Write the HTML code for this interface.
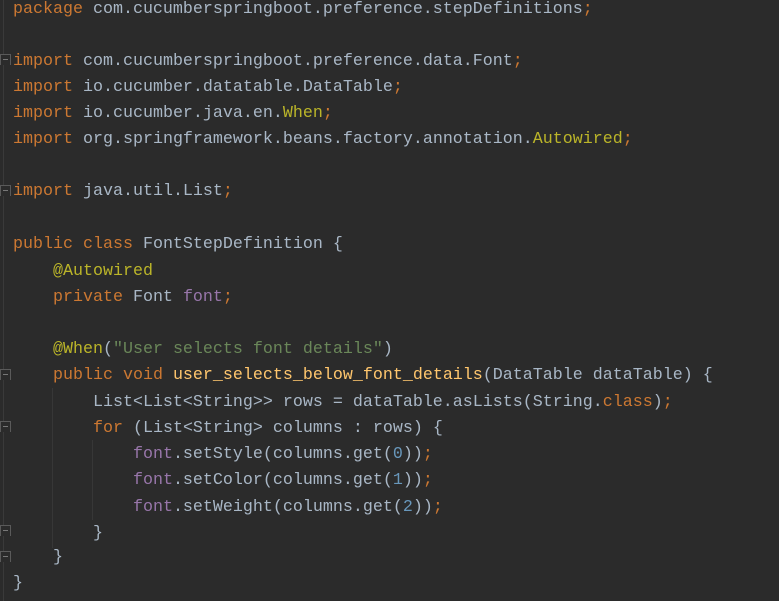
<!DOCTYPE html>
<html><head><meta charset="utf-8"><style>
body{margin:0;width:779px;height:601px;background:#2b2b2b;overflow:hidden;position:relative;font-family:"Liberation Mono",monospace;font-size:16.67px;color:#a9b7c6}
.l{position:absolute;left:13px;white-space:pre;height:26px;line-height:26px;margin-top:2px}
.k{color:#cc7832}.a{color:#bbb529}.s{color:#6a8759}.n{color:#6897bb}.f{color:#9876aa}.m{color:#ffc66d}
.g{position:absolute;left:3px;top:0;width:1px;height:601px;background:#3a3a3a}
.ig{position:absolute;width:1px;background:#373737}
.fold{position:absolute;left:0;width:9px;height:10px;border:1px solid #5a5a5a;border-bottom:none;background:#2b2b2b}
.fold:after{content:"";position:absolute;left:2px;top:4px;width:5px;height:1px;background:#777}
</style></head><body>
<div class="g"></div>
<div class="ig" style="left:52px;top:388px;height:160px"></div>
<div class="ig" style="left:92px;top:440px;height:80px"></div>
<div class="fold" style="top:54px"></div>
<div class="fold" style="top:185px"></div>
<div class="fold" style="top:369px"></div>
<div class="fold" style="top:421px"></div>
<div class="fold" style="top:525px"></div>
<div class="fold" style="top:551px"></div>
<div class="l" style="top:-5px"><span class="k">package</span> com.cucumberspringboot.preference.stepDefinitions<span class="k">;</span></div>
<div class="l" style="top:47px"><span class="k">import</span> com.cucumberspringboot.preference.data.Font<span class="k">;</span></div>
<div class="l" style="top:73px"><span class="k">import</span> io.cucumber.datatable.DataTable<span class="k">;</span></div>
<div class="l" style="top:99px"><span class="k">import</span> io.cucumber.java.en.<span class="a">When</span><span class="k">;</span></div>
<div class="l" style="top:125px"><span class="k">import</span> org.springframework.beans.factory.annotation.<span class="a">Autowired</span><span class="k">;</span></div>
<div class="l" style="top:177px"><span class="k">import</span> java.util.List<span class="k">;</span></div>
<div class="l" style="top:230px"><span class="k">public class</span> FontStepDefinition {</div>
<div class="l" style="top:257px">    <span class="a">@Autowired</span></div>
<div class="l" style="top:283px">    <span class="k">private</span> Font <span class="f">font</span><span class="k">;</span></div>
<div class="l" style="top:335px">    <span class="a">@When</span>(<span class="s">"User selects font details"</span>)</div>
<div class="l" style="top:361px">    <span class="k">public void</span> <span class="m">user_selects_below_font_details</span>(DataTable dataTable) {</div>
<div class="l" style="top:388px">        List&lt;List&lt;String&gt;&gt; rows = dataTable.asLists(String.<span class="k">class</span>)<span class="k">;</span></div>
<div class="l" style="top:414px">        <span class="k">for</span> (List&lt;String&gt; columns : rows) {</div>
<div class="l" style="top:440px">            <span class="f">font</span>.setStyle(columns.get(<span class="n">0</span>))<span class="k">;</span></div>
<div class="l" style="top:466px">            <span class="f">font</span>.setColor(columns.get(<span class="n">1</span>))<span class="k">;</span></div>
<div class="l" style="top:493px">            <span class="f">font</span>.setWeight(columns.get(<span class="n">2</span>))<span class="k">;</span></div>
<div class="l" style="top:519px">        }</div>
<div class="l" style="top:543px">    }</div>
<div class="l" style="top:569px">}</div>
</body></html>
